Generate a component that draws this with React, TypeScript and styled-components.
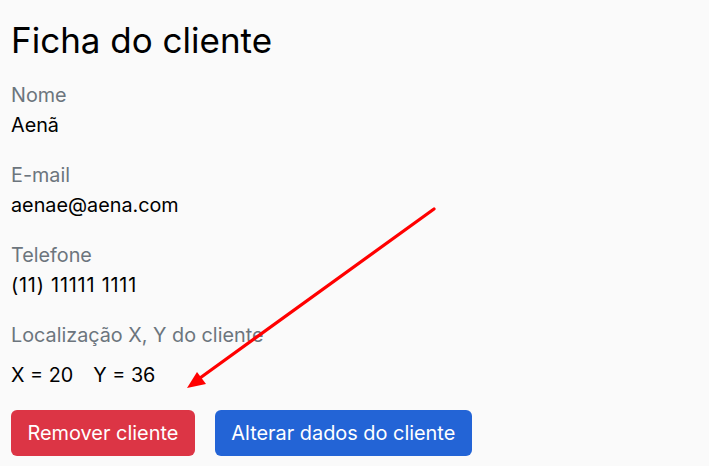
import { createGlobalStyle, styled } from "styled-components";

const GlobalStyle = createGlobalStyle`
  body {
    margin: 0;
    background: #ffffff;
    font-family: Inter, "Noto Sans", sans-serif;
  }
`;

export default function App() {
  return (
    <>
      <GlobalStyle />
      <Card>
        <Title>Ficha do cliente</Title>
        <Field>
          <Label>Nome</Label>
          <Value>Aenã</Value>
        </Field>
        <Field>
          <Label>E-mail</Label>
          <Value>aenae@aena.com</Value>
        </Field>
        <Field>
          <Label>Telefone</Label>
          <Value $spaced>(11) 11111 1111</Value>
        </Field>
        <Field>
          <Label>Localização X, Y do cliente</Label>
          <Coords>
            <Coord>X = 20</Coord>
            <Coord>Y = 36</Coord>
          </Coords>
        </Field>
        <Actions>
          <Button $variant="danger">Remover cliente</Button>
          <Button $variant="primary">Alterar dados do cliente</Button>
        </Actions>
        <Arrow width="709" height="474" viewBox="0 0 709 474">
          <line
            x1="434"
            y1="209"
            x2="200"
            y2="378"
            stroke="#ff0000"
            strokeWidth="3.2"
            strokeLinecap="round"
          />
          <polygon points="187,388 197,372 206,384" fill="#ff0000" />
        </Arrow>
      </Card>
    </>
  );
}

const Card = styled.div`
  position: relative;
  background: #fafafa;
  padding: 20px 11px 10px;
  box-shadow: 0 3px 6px rgba(0, 0, 0, 0.35);
`;

const Title = styled.h1`
  margin: 0 0 20px;
  font-size: 35px;
  font-weight: 400;
  line-height: 40px;
  color: #000;
`;

const Field = styled.div`
  margin-bottom: 20px;
`;

const Label = styled.div`
  font-size: 19.8px;
  line-height: 30px;
  color: #6c757d;
`;

const Value = styled.div<{ $spaced?: boolean }>`
  font-size: 19.8px;
  line-height: 30px;
  letter-spacing: ${(p) => (p.$spaced ? "0.8px" : "normal")};
  color: #000;
`;

const Coords = styled.div`
  display: flex;
  gap: 20px;
  margin-top: 10px;
  font-size: 19.8px;
  line-height: 30px;
  color: #000;
`;

const Coord = styled.span``;

const Actions = styled.div`
  display: flex;
  gap: 20px;
`;

const Button = styled.button<{ $variant: "danger" | "primary" }>`
  height: 46px;
  padding: 0 16.5px;
  border: none;
  border-radius: 6px;
  font-family: Inter, "Noto Sans", sans-serif;
  font-size: 19.9px;
  color: #fff;
  background: ${(p) => (p.$variant === "danger" ? "#dc3545" : "#2364d6")};
  cursor: pointer;
`;

const Arrow = styled.svg`
  position: absolute;
  top: 0;
  left: 0;
  pointer-events: none;
`;
